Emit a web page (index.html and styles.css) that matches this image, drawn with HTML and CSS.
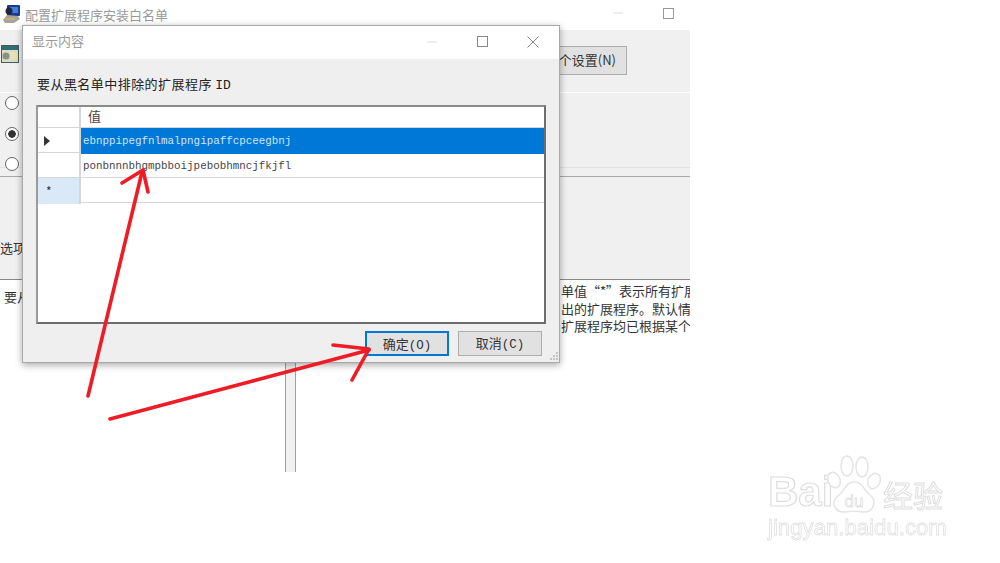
FILE: index.html
```html
<!DOCTYPE html>
<html>
<head lang="en">
  <meta charset="UTF-8">
  <title>配置扩展程序安装白名单</title>
  <link rel="stylesheet" href="styles.css">
</head>
<body>
<div class="screen">
  <!-- 后面的窗口 -->
  <div class="win-back">
    <div class="titlebar back-title">
      <svg class="app-icon" width="18" height="18" viewBox="0 0 18 18">
        <rect x="4" y="0" width="13" height="11" rx="1" fill="#1f3a8c"/>
        <rect x="7" y="2" width="8" height="6" fill="#3f7fe0"/>
        <circle cx="6" cy="6" r="3.5" fill="#23233a"/>
        <path d="M0 15 L4 10 L15 11 L17 14 L11 18 L2 18 Z" fill="#a3a39c"/>
        <path d="M2 14 L12 14" stroke="#d9b06a" stroke-width="1.5"/>
      </svg>
      <span class="title-text">配置扩展程序安装白名单</span>
      <svg class="ctl ctl-min" width="10" height="2" viewBox="0 0 10 2"><path d="M0 1H10" stroke="#ddd"/></svg>
      <svg class="ctl ctl-max" width="11" height="11" viewBox="0 0 11 11"><rect x=".5" y=".5" width="10" height="10" fill="none" stroke="#999"/></svg>
    </div>
    <div class="toolbar">
      <svg class="tool-icon" width="18" height="18" viewBox="0 0 18 18">
        <rect x=".5" y=".5" width="17" height="17" fill="#d8dcc8" stroke="#4a5a5a"/>
        <rect x="1" y="1" width="16" height="4" fill="#2f6f73"/>
        <circle cx="5" cy="11" r="3.5" fill="#8d8f80"/>
        <rect x="10" y="7" width="6" height="7" fill="#e8e2b0"/>
      </svg>
      <button class="btn next-btn">下一个设置(N)</button>
    </div>
    <div class="section section-radios">
      <span class="radio"></span>
      <span class="radio checked"></span>
      <span class="radio"></span>
    </div>
    <div class="section section-opts">
      <span class="opts-label">选项</span>
    </div>
    <div class="panes">
      <div class="pane-left">要从</div>
      <div class="splitter"></div>
      <div class="pane-right">
        <p>单值“*”表示所有扩展</p>
        <p>出的扩展程序。默认情</p>
        <p>扩展程序均已根据某个</p>
      </div>
    </div>
  </div>

  <!-- 显示内容 -->
  <div class="dialog">
    <div class="titlebar dlg-title">
      <span class="title-text">显示内容</span>
      <svg class="ctl dlg-min" width="10" height="2" viewBox="0 0 10 2"><path d="M0 1H10" stroke="#ddd"/></svg>
      <svg class="ctl dlg-max" width="11" height="11" viewBox="0 0 11 11"><rect x=".5" y=".5" width="10" height="10" fill="none" stroke="#888"/></svg>
      <svg class="ctl dlg-close" width="12" height="12" viewBox="0 0 12 12"><path d="M.5 .5L11.5 11.5M11.5 .5L.5 11.5" stroke="#888"/></svg>
    </div>
    <div class="dlg-body">
      <div class="dlg-label">要从黑名单中排除的扩展程序 <span class="mono">ID</span></div>
      <div class="grid">
        <div class="row row-head">
          <div class="head-cell"></div>
          <div class="val-cell">值</div>
        </div>
        <div class="row row-sel">
          <div class="head-cell"><span class="pointer"></span></div>
          <div class="val-cell mono">ebnppipegfnlmalpngipaffcpceegbnj</div>
        </div>
        <div class="row">
          <div class="head-cell"></div>
          <div class="val-cell mono">ponbnnnbhgmpbboijpebobhmncjfkjfl</div>
        </div>
        <div class="row row-new">
          <div class="head-cell">*</div>
          <div class="val-cell"></div>
        </div>
      </div>
      <div class="dlg-btns">
        <button class="btn btn-ok">确定<span class="mono">(O)</span></button>
        <button class="btn">取消<span class="mono">(C)</span></button>
      </div>
      <svg class="grip" width="10" height="10" viewBox="0 0 10 10">
        <path d="M8 1h2v2H8zM5 4h2v2H5zM8 4h2v2H8zM2 7h2v2H2zM5 7h2v2H5zM8 7h2v2H8z" fill="#c4c4c4"/>
      </svg>
    </div>
  </div>

  <!-- 红色箭头 -->
  <svg class="marks" width="1000" height="563" viewBox="0 0 1000 563">
    <g fill="none" stroke="#ee1c25" stroke-width="3.6" stroke-linecap="round" stroke-linejoin="round">
      <path d="M88 396L142 172"/>
      <path d="M122 183L143 170L148 192"/>
      <path d="M110 419L369 350"/>
      <path d="M333 345L369 349L352 380"/>
    </g>
  </svg>

  <!-- 水印 -->
  <div class="mark-logo">
    <div class="logo-line">
      <span class="logo-bai">Bai</span>
      <svg class="paw" width="56" height="62" viewBox="0 0 56 62">
        <g fill="#fff" stroke="#e4e4e4" stroke-width="1.5">
          <ellipse cx="8" cy="26" rx="6" ry="8" transform="rotate(-25 8 26)"/>
          <ellipse cx="21" cy="12" rx="6" ry="10"/>
          <ellipse cx="36" cy="13" rx="6" ry="10"/>
          <ellipse cx="48" cy="27" rx="6" ry="8" transform="rotate(25 48 27)"/>
          <path d="M28 28C37 28 38 37 44 41C52 47 47 59 37 58C31 57 25 57 19 58C9 59 4 48 12 42C19 37 19 28 28 28Z"/>
        </g>
        <text x="28" y="53" text-anchor="middle" class="paw-du">du</text>
      </svg>
      <span class="logo-cn">经验</span>
    </div>
    <div class="logo-url">jingyan.baidu.com</div>
  </div>
</div>
</body>
</html>
```

FILE: styles.css
```css
* {
  margin: 0;
  padding: 0;
  box-sizing: border-box;
}

body {
  background: #fff;
  font-family: "Noto Sans CJK SC", "Liberation Sans", sans-serif;
  overflow: hidden;
}

.screen {
  width: 1000px;
  height: 563px;
  position: relative;
  overflow: hidden;
  filter: blur(0.35px);
}

.mono {
  font-family: "Liberation Mono", "Noto Sans CJK SC", monospace;
}

.titlebar {
  background: #fff;
  display: flex;
  align-items: center;
  position: relative;
}

.title-text {
  font-size: 13px;
  color: #9a9a9a;
}

.ctl {
  position: absolute;
}

.btn {
  background: #e1e1e1;
  border: 1px solid #adadad;
  color: #333;
  font-family: "Noto Sans CJK SC", sans-serif;
  font-size: 13px;
}

/* back window */
.win-back {
  position: absolute;
  left: 0;
  top: 0;
  width: 690px;
  height: 472px;
  display: flex;
  flex-direction: column;
}

.back-title {
  height: 30px;
  padding-left: 3px;
  flex: none;
}

.app-icon {
  margin-right: 4px;
  margin-top: -2px;
}

.back-title .title-text {
  margin-top: -2px;
}

.ctl-min {
  left: 613px;
  top: 12px;
}

.ctl-max {
  left: 663px;
  top: 8px;
}

.toolbar {
  height: 63px;
  background: #f0f0f0;
  border-bottom: 1px solid #fff;
  display: flex;
  align-items: flex-start;
  justify-content: space-between;
  padding: 15px 63px 0 1px;
  flex: none;
}

.tool-icon {
  margin-top: 0;
}

.next-btn {
  width: 150px;
  height: 29px;
  margin-top: 1px;
  text-align: right;
  padding-right: 10px;
  padding-bottom: 2px;
}

.section {
  background: #f0f0f0;
  flex: none;
}

.section-radios {
  height: 84px;
  padding: 3px 0 0 5px;
  display: flex;
  flex-direction: column;
  gap: 16.5px;
  border-bottom: 1px solid #a8a8a8;
  box-shadow: inset 0 -8px 0 #f0f0f0, inset 0 -9px 0 #e2e2e2;
}

.radio {
  display: block;
  width: 14px;
  height: 14px;
  border: 1px solid #666;
  border-radius: 50%;
  background: #fff;
  flex: none;
}

.radio.checked {
  background: radial-gradient(circle, #333 0 3.5px, #fff 4px);
}

.section-opts {
  height: 103px;
  padding-top: 62px;
  border-bottom: 1px solid #888;
}

.opts-label {
  font-size: 13px;
  color: #333;
  line-height: 18px;
  display: block;
}

.panes {
  flex: 1;
  display: flex;
  background: #fff;
}

.pane-left {
  width: 285px;
  padding: 8px 0 0 4px;
  font-size: 13px;
  color: #333;
  line-height: 18px;
}

.splitter {
  width: 11px;
  background: #f0f0f0;
  border-left: 1px solid #a0a0a0;
  border-right: 1px solid #a0a0a0;
}

.pane-right {
  flex: 1;
  padding: 2px 0 0 265px;
  overflow: hidden;
  font-size: 13px;
  color: #333;
  line-height: 17.5px;
  white-space: nowrap;
}

/* dialog */
.dialog {
  position: absolute;
  left: 22px;
  top: 25px;
  width: 538px;
  height: 338px;
  border: 1px solid #a9a9a9;
  box-shadow: 0 2px 7px rgba(0, 0, 0, 0.35);
  display: flex;
  flex-direction: column;
  background: #efefef;
}

.dlg-title {
  height: 33px;
  padding-left: 9px;
}

.dlg-title .title-text {
  margin-top: -4px;
}

.dlg-min {
  left: 404px;
  top: 15px;
}

.dlg-max {
  left: 454px;
  top: 10px;
}

.dlg-close {
  left: 504px;
  top: 10px;
}

.dlg-body {
  flex: 1;
  padding: 0 13px 0 13px;
  position: relative;
  display: flex;
  flex-direction: column;
}

.dlg-label {
  font-size: 13px;
  color: #222;
  height: 46px;
  line-height: 18px;
  padding: 16px 0 0 1px;
  letter-spacing: 0.45px;
  flex: none;
}

.dlg-label .mono {
  font-size: 13px;
  letter-spacing: 0;
}

.grid {
  height: 219px;
  width: 510px;
  background: #fff;
  border: 2px solid #6d6d6d;
  border-top-color: #8a8a8a;
  border-left-color: #9a9a9a;
  flex: none;
}

.row {
  display: grid;
  grid-template-columns: 43px 1fr;
  height: 25px;
  border-bottom: 1px solid #d6d6d6;
  font-size: 12px;
  line-height: 26px;
  color: #444;
}

.row-head {
  height: 21px;
  line-height: 18px;
}

.head-cell {
  border-right: 2px solid #d6d6d6;
  display: flex;
  align-items: center;
  padding-left: 6px;
  color: #333;
  font-size: 12px;
}

.row-new .head-cell {
  background: #d9e9f7;
  padding-left: 8px;
}

.val-cell {
  padding-left: 2px;
  font-size: 10.85px;
  white-space: nowrap;
}

.row-head .val-cell {
  padding-left: 7px;
  font-size: 13px;
}

.row-sel .val-cell {
  background: #0078d7;
  color: #cfe6fb;
}

.pointer {
  width: 0;
  height: 0;
  border-left: 6px solid #333;
  border-top: 5px solid transparent;
  border-bottom: 5px solid transparent;
}

.dlg-btns {
  display: flex;
  justify-content: flex-end;
  gap: 9px;
  padding: 7px 4px 0 0;
}

.dlg-btns .btn {
  width: 84px;
  height: 25px;
  line-height: 22px;
}

.dlg-btns .mono {
  font-size: 12.5px;
}

.btn-ok {
  border: 2px solid #0078d7;
}

.grip {
  position: absolute;
  right: 1px;
  bottom: 1px;
}

/* annotations */
.marks {
  position: absolute;
  left: 0;
  top: 0;
}

/* watermark */
.mark-logo {
  position: absolute;
  left: 768px;
  top: 455px;
  width: 180px;
}

.logo-line {
  display: flex;
  align-items: flex-end;
  height: 59px;
}

.logo-bai {
  font-family: "Liberation Sans", sans-serif;
  font-size: 42px;
  line-height: 44px;
  font-weight: bold;
  color: #fff;
  -webkit-text-stroke: 1.2px #dedede;
  width: 60px;
  flex: none;
}

.paw {
  flex: none;
  margin: 0 0 -2px -2px;
}

.paw-du {
  font-family: "Liberation Sans", sans-serif;
  font-size: 17px;
  fill: #fff;
  stroke: #dedede;
  stroke-width: 0.8px;
}

.logo-cn {
  font-size: 30px;
  line-height: 40px;
  color: #fff;
  -webkit-text-stroke: 1px #dedede;
  margin-left: 1px;
  flex: none;
}

.logo-url {
  font-family: "Liberation Sans", sans-serif;
  font-size: 22.2px;
  line-height: 26px;
  margin-top: 1px;
  color: #fff;
  -webkit-text-stroke: 0.8px #e0e0e0;
  white-space: nowrap;
}
```
